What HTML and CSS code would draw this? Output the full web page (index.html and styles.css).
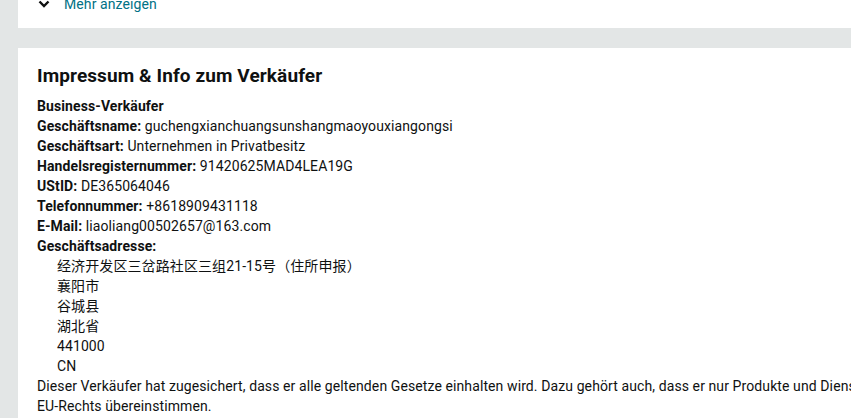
FILE: index.html
```html
<!DOCTYPE html>
<html lang="de">
<head>
  <meta charset="UTF-8" />
  <title>Impressum & Info zum Verkäufer</title>
  <link rel="stylesheet" href="styles.css">
</head>
<body>
  <div class="page">
    <div class="box box-top">
      <a href="#" class="expander">
        <svg class="chevron" width="12" height="8" viewBox="0 0 12 8"><path d="M1.5 1.5 L6 6 L10.5 1.5" fill="none" stroke="#0f1111" stroke-width="2.4"/></svg>
        <span>Mehr anzeigen</span>
      </a>
    </div>

    <div class="box box-seller">
      <h2>Impressum &amp; Info zum Verkäufer</h2>
      <div class="row"><b>Business-Verkäufer</b></div>
      <div class="row"><b>Geschäftsname:</b> guchengxianchuangsunshangmaoyouxiangongsi</div>
      <div class="row"><b>Geschäftsart:</b> Unternehmen in Privatbesitz</div>
      <div class="row"><b>Handelsregisternummer:</b> 91420625MAD4LEA19G</div>
      <div class="row"><b>UStID:</b> DE365064046</div>
      <div class="row"><b>Telefonnummer:</b> +8618909431118</div>
      <div class="row"><b>E-Mail:</b> liaoliang00502657@163.com</div>
      <div class="row"><b>Geschäftsadresse:</b></div>
      <div class="address">
        <div class="row">经济开发区三岔路社区三组21-15号（住所申报）</div>
        <div class="row">襄阳市</div>
        <div class="row">谷城县</div>
        <div class="row">湖北省</div>
        <div class="row">441000</div>
        <div class="row">CN</div>
      </div>
      <p class="note">Dieser Verkäufer hat zugesichert, dass er alle geltenden Gesetze einhalten wird. Dazu gehört auch, dass er nur Produkte und Dienstleistungen anbietet, die mit den Anforderungen des<br>EU-Rechts übereinstimmen.</p>
    </div>
  </div>
</body>
</html>
```

FILE: styles.css
```css
html, body {
  margin: 0;
  padding: 0;
  overflow: hidden;
}

body {
  background: #e3e6e6;
  font-family: Roboto, "Noto Sans CJK SC", sans-serif;
  font-size: 14px;
  line-height: 20px;
  letter-spacing: 0.1px;
  color: #0f1111;
}

.page {
  padding-left: 18px;
  width: 1200px;
}

.box {
  background: #fff;
  padding: 0 19px;
}

.box-top {
  height: 40px;
  margin-top: -12px;
}

.expander {
  display: flex;
  align-items: center;
  gap: 14px;
  padding-left: 1px;
  padding-top: 4px;
  color: #007185;
  text-decoration: none;
  line-height: 24px;
}

.box-seller {
  margin-top: 20px;
  padding-top: 16px;
  padding-bottom: 20px;
}

h2 {
  font-size: 19px;
  line-height: 24px;
  font-weight: 700;
  margin: 0 0 8px;
}

.address {
  padding-left: 20px;
}

.note {
  margin: 0;
  white-space: nowrap;
}
```
